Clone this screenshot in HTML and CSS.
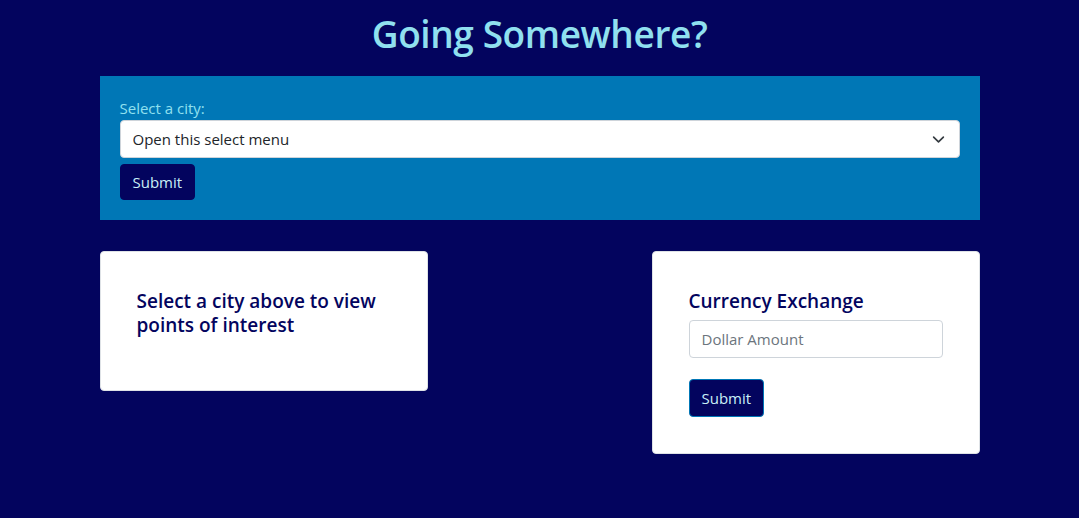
FILE: index.html
```html
<!DOCTYPE html>
<html lang="en">
<head>
<meta charset="utf-8">
<title>Going Somewhere?</title>
<link rel="stylesheet" href="styles.css">
</head>
<body>
  <h1 class="title">Going Somewhere?</h1>
  <main class="container">
    <form class="city-panel">
      <label class="city-label" for="city">Select a city:</label>
      <div class="select-wrap">
        <select id="city" class="city-select">
          <option>Open this select menu</option>
        </select>
        <svg class="chevron" width="13" height="13" viewBox="0 0 16 16" aria-hidden="true"><path d="M2 5l6 6 6-6" fill="none" stroke="#343a40" stroke-width="2" stroke-linecap="round" stroke-linejoin="round"/></svg>
      </div>
      <button type="button" class="btn btn-panel">Submit</button>
    </form>
    <div class="cards">
      <section class="card card-poi">
        <h2 class="card-title">Select a city above to view points of interest</h2>
      </section>
      <section class="card card-currency">
        <h2 class="card-title currency-title">Currency Exchange</h2>
        <input class="amount" type="text" placeholder="Dollar Amount">
        <button type="button" class="btn btn-card">Submit</button>
      </section>
    </div>
  </main>
</body>
</html>
```

FILE: styles.css
```css
* { box-sizing: border-box; }
html, body { margin: 0; padding: 0; }
body {
  background: #03045e;
  font-family: "Open Sans", "Noto Sans", "Liberation Sans", sans-serif;
  font-size: 16px;
  line-height: 1.5;
  color: #212529;
  height: 518px;
  overflow: hidden;
}
.title {
  margin: 0;
  padding-top: 12px;
  height: 76px;
  text-align: center;
  font-size: 37px;
  font-weight: 600;
  line-height: 1.2;
  color: #90e0ef;
  letter-spacing: -0.4px;
}
.container {
  width: 880px;
  margin: 0 auto;
}
.city-panel {
  background: #0077b6;
  padding: 20px;
  display: flex;
  flex-direction: column;
  align-items: flex-start;
}
.city-label {
  color: #90e0ef;
  font-size: 15px;
  line-height: 24px;
}
.select-wrap {
  position: relative;
  width: 100%;
}
.city-select {
  appearance: none;
  -webkit-appearance: none;
  width: 100%;
  height: 38px;
  padding: 0 36px 0 12px;
  border: 1px solid #ced4da;
  border-radius: 4px;
  background: #fff;
  font-family: inherit;
  font-size: 15px;
  color: #212529;
}
.chevron {
  position: absolute;
  right: 15px;
  top: 13px;
}
.btn {
  font-family: inherit;
  font-size: 15px;
  line-height: 24px;
  color: #caf0f8;
  background: #03045e;
  border-radius: 4px;
  padding: 5px 12px;
  cursor: pointer;
}
.btn-panel {
  margin-top: 6px;
  border: 1px solid #03045e;
}
.btn-card {
  margin-top: 21px;
  padding: 6px 12px;
  border: 1px solid #0077b6;
}
.cards {
  margin-top: 31px;
  display: flex;
  justify-content: space-between;
  align-items: flex-start;
}
.card {
  width: 328px;
  background: #fff;
  border: 1px solid #dee2e6;
  border-radius: 4px;
  padding: 36px;
}
.card-title {
  margin: 0;
  font-size: 19px;
  font-weight: 600;
  line-height: 24px;
  color: #03045e;
}
.card-poi {
  height: 140px;
  padding-top: 37px;
}
.card-currency {
  display: flex;
  flex-direction: column;
  align-items: flex-start;
  padding-top: 37px;
  padding-bottom: 36px;
}
.currency-title { margin-bottom: 7px; }
.amount {
  width: 100%;
  height: 38px;
  padding: 0 12px;
  border: 1px solid #ced4da;
  border-radius: 4px;
  font-family: inherit;
  font-size: 15px;
  color: #212529;
}
.amount::placeholder { color: #6c757d; }
```
